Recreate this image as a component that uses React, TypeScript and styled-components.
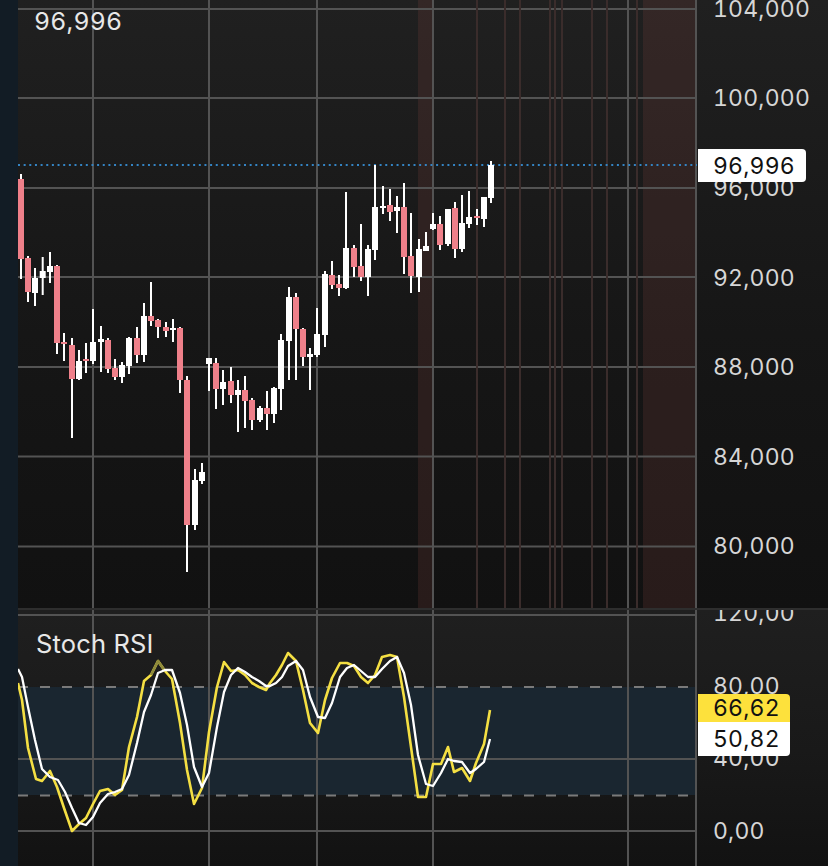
import React from "react";
import styled, { createGlobalStyle } from "styled-components";

const GlobalStyle = createGlobalStyle`
  html, body {
    margin: 0;
    padding: 0;
    background: #111;
  }
  #root {
    width: 828px;
    height: 866px;
    overflow: hidden;
  }
`;

const Screen = styled.div`
  display: flex;
  width: 828px;
  height: 866px;
  font-family: Inter, "Liberation Sans", sans-serif;
`;

const LeftRail = styled.div`
  width: 18px;
  flex: none;
  background: #121c25;
`;

const Main = styled.div`
  flex: 1;
  display: flex;
  flex-direction: column;
`;

const Pane = styled.section<{ $height: number; $from: string; $mid: string; $to: string }>`
  position: relative;
  flex: none;
  height: ${(p) => p.$height}px;
  display: flex;
  overflow: hidden;
  background: linear-gradient(to bottom, ${(p) => p.$from}, ${(p) => p.$mid} 55%, ${(p) => p.$to});
`;

const Separator = styled.div`
  flex: none;
  height: 2px;
  background: #2e2e2e;
`;

const Plot = styled.div`
  position: relative;
  width: 679px;
  flex: none;
`;

const ChartSvg = styled.svg`
  display: block;
  width: 679px;
  height: 100%;
`;

const Legend = styled.div<{ $left: number; $top: number; $size: number }>`
  position: absolute;
  left: ${(p) => p.$left}px;
  top: ${(p) => p.$top}px;
  color: #e8e8e8;
  font-size: ${(p) => p.$size}px;
  line-height: 28px;
  letter-spacing: 0.2px;
  font-variant-numeric: tabular-nums;
`;

const Axis = styled.div<{ $offset: number; $row: number }>`
  flex: 1;
  display: grid;
  grid-auto-rows: ${(p) => p.$row}px;
  align-items: center;
  align-content: start;
  margin-top: ${(p) => p.$offset}px;
  padding-left: 16px;
`;

const Tick = styled.div`
  color: #d6d6d6;
  font-size: 23px;
  line-height: 28px;
  letter-spacing: 0.2px;
  font-variant-numeric: tabular-nums;
`;

const PriceTag = styled.div<{ $top: number; $bg: string; $height: number; $radius: string; $width: number }>`
  position: absolute;
  left: 680px;
  top: ${(p) => p.$top}px;
  width: ${(p) => p.$width}px;
  height: ${(p) => p.$height}px;
  box-sizing: border-box;
  display: flex;
  align-items: center;
  padding-left: 15px;
  background: ${(p) => p.$bg};
  border-radius: ${(p) => p.$radius};
  color: #111;
  font-size: 23px;
  letter-spacing: 0.2px;
  font-variant-numeric: tabular-nums;
`;

// x, high, low, body top, body bottom, red
type Candle = [number, number, number, number, number, 0 | 1];

const candles: Candle[] = [
  [21, 174, 279, 179, 259, 1],
  [28, 256, 302, 258, 292, 1],
  [35, 268, 306, 278, 293, 0],
  [42.7, 257, 295, 271, 278, 0],
  [50, 252, 283, 266, 272, 0],
  [57, 265, 354, 266, 343, 1],
  [64, 333, 361, 342, 344, 1],
  [72, 338, 438, 345, 379, 1],
  [79, 350, 380, 361, 379, 0],
  [86, 343, 373, 359, 361, 1],
  [93, 309, 364, 342, 361, 0],
  [101, 326, 372, 339, 342, 0],
  [108, 338, 373, 340, 369, 1],
  [115, 359, 380, 368, 377, 1],
  [122, 362, 383, 365, 377, 0],
  [129, 337, 374, 338, 366, 0],
  [137, 327, 363, 338, 355, 1],
  [144, 303, 362, 316, 355, 0],
  [151, 282, 326, 316, 321, 1],
  [158, 319, 338, 320, 327, 1],
  [166, 322, 337, 327, 331, 1],
  [173, 319, 342, 328, 329, 0],
  [180, 327, 393, 328, 380, 1],
  [187, 376, 572, 380, 525, 1],
  [195, 469, 530, 480, 525, 0],
  [202, 463, 484, 472, 481, 0],
  [209, 358, 391, 358, 364, 0],
  [216, 358, 409, 363, 389, 1],
  [223, 370, 405, 382, 389, 0],
  [231, 367, 403, 381, 395, 1],
  [238, 380, 432, 390, 395, 0],
  [245, 376, 428, 390, 401, 1],
  [252, 398, 430, 400, 420, 1],
  [260, 406, 422, 408, 420, 0],
  [267, 391, 430, 408, 414, 1],
  [274, 387, 423, 388, 414, 0],
  [281, 334, 410, 340, 389, 0],
  [289, 287, 380, 297, 341, 0],
  [296, 293, 380, 297, 329, 1],
  [303, 328, 366, 329, 357, 1],
  [310, 348, 390, 354, 357, 0],
  [317, 308, 357, 334, 355, 0],
  [325, 271, 347, 274, 335, 0],
  [332, 261, 289, 275, 285, 1],
  [339, 275, 296, 284, 288, 1],
  [346, 192, 289, 248, 288, 0],
  [354, 245, 277, 248, 267, 1],
  [361, 224, 281, 266, 277, 1],
  [368, 245, 296, 249, 277, 0],
  [375, 165, 260, 207, 250, 0],
  [383, 186, 214, 206, 208, 0],
  [390, 189, 221, 205, 212, 1],
  [397, 196, 233, 207, 211, 0],
  [404, 183, 274, 207, 257, 1],
  [411, 213, 293, 256, 276, 1],
  [419, 239, 292, 249, 277, 0],
  [426, 232, 251, 246, 251, 0],
  [433, 213, 230, 224, 229, 0],
  [440, 216, 250, 224, 245, 1],
  [448, 209, 246, 209, 244, 0],
  [455, 202, 258, 208, 249, 1],
  [462, 195, 252, 223, 249, 0],
  [469, 191, 228, 217, 224, 0],
  [477, 209, 225, 216, 218, 1],
  [484, 197, 227, 197, 219, 0],
  [491, 161, 203, 165, 198, 0],
];

const yellowLine =
  "18,683 22,700 28,748 36,779 42,781 50,771 57,787 64,808 72,831 79,824 86,818 93,804 100,791 108,789 115,795 122,790 129,747 137,717 144,681 151,675 158,661 165,671 172,679 180,723 187,770 194,804 202,788 209,732 217,687 224,662 231,671 238,670 245,675 252,683 259,687 266,690 270,683 276,675 282,665 288,653 296,661 303,690 310,723 318,733 325,700 332,678 340,663 347,663 354,666 361,677 368,683 375,675 382,657 390,655 397,657 404,697 411,747 418,797 426,797 433,764 441,764 448,747 454,772 462,768 470,781 476,763 484,744 490,710";

const whiteLine =
  "18,669 22,677 28,707 35,740 42,769 50,777 58,780 65,792 72,808 79,823 86,825 93,817 100,803 108,794 115,792 122,789 129,775 137,743 144,712 151,695 158,673 165,670 172,670 180,693 187,725 194,767 202,787 209,773 217,727 224,692 231,675 238,668 245,672 252,677 259,681 266,686 270,686 276,683 282,677 288,666 296,661 303,670 310,697 318,717 325,718 332,703 340,677 347,668 354,665 361,671 368,677 375,677 382,669 390,661 397,657 404,673 411,705 418,755 426,784 433,786 441,773 448,759 454,761 462,762 470,773 476,769 484,762 490,739";

const gridX = [93, 209, 317, 433, 628];
const priceGridY = [9, 98, 188, 277, 367, 456.5, 546.5];
const sessionLines = [477, 505, 520, 550, 555, 562, 592, 607, 637];

const GridLine = styled.line`
  stroke: #535353;
  stroke-width: 2;
`;

const SessionLine = styled.line`
  stroke: #3a2c2b;
  stroke-width: 2;
`;

const SessionBand = styled.rect`
  fill: rgba(115, 62, 58, 0.24);
`;

const LastPriceLine = styled.line`
  stroke: #3484c4;
  stroke-width: 2;
  stroke-dasharray: 2 3.65;
`;

const Wick = styled.rect`
  fill: #fff;
`;

const Body = styled.rect<{ $red: boolean }>`
  fill: ${(p) => (p.$red ? "#ef808a" : "#fff")};
`;

const OscBand = styled.rect`
  fill: #1a2630;
`;

const DashLine = styled.line`
  stroke: #7a7a7a;
  stroke-width: 2;
  stroke-dasharray: 10 12;
`;

const OscLine = styled.polyline<{ $color: string; $width: number }>`
  fill: none;
  stroke: ${(p) => p.$color};
  stroke-width: ${(p) => p.$width};
  stroke-linejoin: round;
`;

const PriceChart = () => (
  <ChartSvg viewBox="18 0 679 608">
    <SessionBand x={418} y={0} width={15} height={608} />
    <SessionBand x={643} y={0} width={53} height={608} />
    {priceGridY.map((y) => (
      <GridLine key={y} x1={18} x2={697} y1={y} y2={y} />
    ))}
    {gridX.map((x) => (
      <GridLine key={x} x1={x} x2={x} y1={0} y2={608} />
    ))}
    <GridLine x1={696} x2={696} y1={0} y2={608} />
    {sessionLines.map((x) => (
      <SessionLine key={x} x1={x} x2={x} y1={0} y2={608} />
    ))}
    <LastPriceLine x1={18} x2={697} y1={165} y2={165} />
    {candles.map(([x, hi, lo, top, bot, red]) => (
      <g key={x}>
        <Wick x={x - 1} y={hi} width={2} height={lo - hi} />
        <Body $red={red === 1} x={x - 3} y={top} width={6} height={Math.max(bot - top, 2)} />
      </g>
    ))}
  </ChartSvg>
);

const OscChart = () => (
  <ChartSvg viewBox="18 610 679 256">
    <OscBand x={18} y={687} width={678} height={108} />
    {[615, 759, 831].map((y) => (
      <GridLine key={y} x1={18} x2={697} y1={y} y2={y} />
    ))}
    {gridX.map((x) => (
      <GridLine key={x} x1={x} x2={x} y1={610} y2={866} />
    ))}
    <GridLine x1={696} x2={696} y1={610} y2={866} />
    <DashLine x1={18} x2={697} y1={687} y2={687} />
    <DashLine x1={18} x2={697} y1={795.5} y2={795.5} />
    <OscLine $color="#f4df43" $width={2.6} points={yellowLine} />
    <OscLine $color="#8f8b3c" $width={2.6} points="151,675 158,661 165,671" />
    <OscLine $color="#ffffff" $width={2.3} points={whiteLine} />
  </ChartSvg>
);

const priceTicks = ["104,000", "100,000", "96,000", "92,000", "88,000", "84,000", "80,000"];
const oscTicks = ["120,00", "80,00", "40,00", "0,00"];

export default function App() {
  return (
    <Screen>
      <GlobalStyle />
      <LeftRail />
      <Main>
        <Pane $height={608} $from="#202020" $mid="#161616" $to="#111111">
          <Plot>
            <PriceChart />
            <Legend $left={16} $top={7} $size={24.8}>96,996</Legend>
          </Plot>
          <Axis $offset={-36} $row={89.6}>
            {priceTicks.map((t) => (
              <Tick key={t}>{t}</Tick>
            ))}
          </Axis>
          <PriceTag $top={149} $bg="#ffffff" $height={33} $width={108} $radius="0 4px 4px 0">
            96,996
          </PriceTag>
        </Pane>
        <Separator />
        <Pane $height={256} $from="#1f1f1f" $mid="#191919" $to="#121212">
          <Plot>
            <OscChart />
            <Legend $left={18} $top={20} $size={25.5}>Stoch RSI</Legend>
          </Plot>
          <Axis $offset={-33} $row={72.5}>
            {oscTicks.map((t) => (
              <Tick key={t}>{t}</Tick>
            ))}
          </Axis>
          <PriceTag $top={84} $bg="#fde13c" $height={28} $width={92} $radius="0 4px 0 0">
            66,62
          </PriceTag>
          <PriceTag $top={112} $bg="#ffffff" $height={34} $width={92} $radius="0 0 4px 0">
            50,82
          </PriceTag>
        </Pane>
      </Main>
    </Screen>
  );
}
